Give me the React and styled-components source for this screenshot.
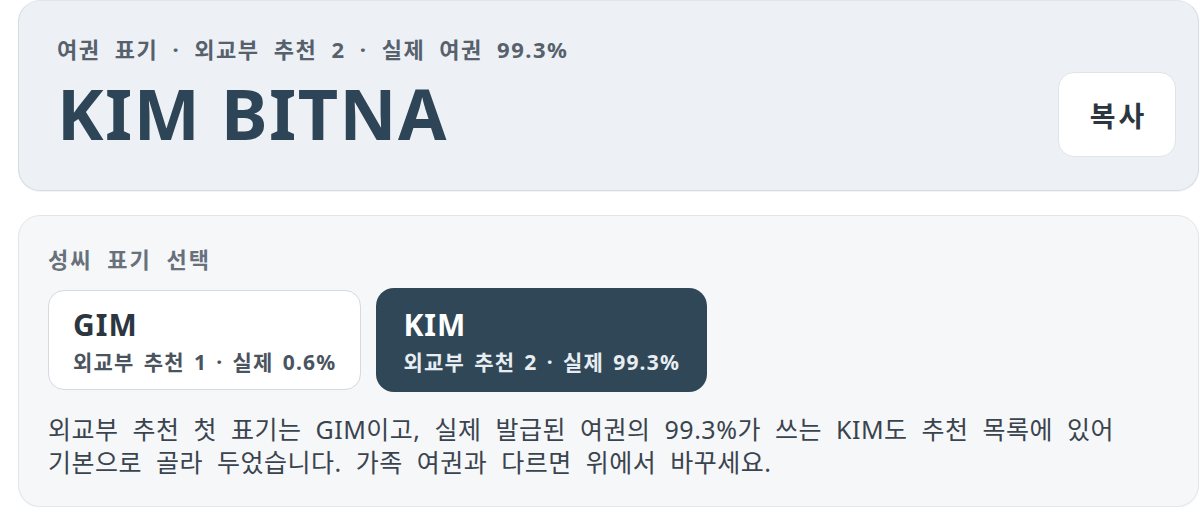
import React, { useState } from 'react';
import styled, { createGlobalStyle } from 'styled-components';

const GlobalStyle = createGlobalStyle`
  * { box-sizing: border-box; }
  body {
    margin: 0;
    background: #ffffff;
    font-family: "Noto Sans", "Noto Sans CJK KR", sans-serif;
    word-break: keep-all;
  }
`;

const Page = styled.div`
  display: flex;
  flex-direction: column;
  gap: 24px;
  padding: 0 1px 0 18px;
  width: 1200px;
`;

const Hero = styled.section`
  display: flex;
  align-items: center;
  justify-content: space-between;
  background: #edf0f5;
  border: 1px solid #d5dde4;
  border-top-color: #e1e6ec;
  border-radius: 22px;
  padding: 29px 22px 31px 38px;
  min-height: 191px;
  box-shadow: 0 1px 1px rgba(30, 50, 70, 0.06);
`;

const HeroText = styled.div`
  display: flex;
  flex-direction: column;
  gap: 8px;
`;

const Caption = styled.div`
  font-size: 22px;
  font-weight: 700;
  color: #56616c;
  line-height: 28px;
  letter-spacing: 1.5px;
  word-spacing: 7px;
`;

const Title = styled.h1`
  margin: 0;
  font-size: 70px;
  font-weight: 700;
  line-height: 84px;
  letter-spacing: 1.5px;
  color: #2d4556;
`;

const CopyButton = styled.button`
  align-self: flex-end;
  width: 118px;
  height: 85px;
  margin-bottom: 2px;
  padding: 0 0 0 3px;
  background: #ffffff;
  border: 1px solid #dfe4e9;
  border-radius: 16px;
  font-family: inherit;
  font-size: 28px;
  font-weight: 700;
  letter-spacing: 3px;
  color: #2b3640;
  cursor: pointer;
`;

const Panel = styled.section`
  background: #f6f7f9;
  border: 1px solid #e2e6ea;
  border-radius: 22px;
  padding: 29px 30px 27px 29px;
  box-shadow: 0 1px 1px rgba(30, 50, 70, 0.05);
`;

const Heading = styled.h2`
  margin: 0 0 17px;
  font-size: 22px;
  font-weight: 700;
  line-height: 28px;
  letter-spacing: 2px;
  word-spacing: 7px;
  color: #68717b;
`;

const Options = styled.div`
  display: flex;
  gap: 17px;
  margin-bottom: 23px;
`;

const Option = styled.button`
  display: flex;
  flex-direction: column;
  align-items: flex-start;
  padding: 15px 24px 14px;
  border-radius: 16px;
  border: 1px solid ${p => (p.$active ? '#2f4757' : '#d3dae0')};
  background: ${p => (p.$active ? '#2f4757' : '#ffffff')};
  color: ${p => (p.$active ? '#ffffff' : '#2b3640')};
  box-shadow: ${p => (p.$active ? '0 0 0 2px #2f4757' : 'none')};
  font-family: inherit;
  text-align: left;
  cursor: pointer;
`;

const OptionName = styled.span`
  font-size: 30px;
  font-weight: 700;
  line-height: 38px;
  letter-spacing: 1px;
`;

const OptionMeta = styled.span`
  margin-top: 5px;
  font-size: 21px;
  font-weight: 700;
  line-height: 26px;
  letter-spacing: 1.2px;
  word-spacing: 2.5px;
  color: ${p => (p.$active ? '#e8edf1' : '#4a545e')};
`;

const Note = styled.p`
  margin: 0;
  font-size: 25px;
  line-height: 33px;
  letter-spacing: 0.5px;
  word-spacing: 7px;
  color: #3a444e;
  max-width: 1110px;
`;

const choices = [
  { name: 'GIM', meta: '외교부 추천 1 · 실제 0.6%' },
  { name: 'KIM', meta: '외교부 추천 2 · 실제 99.3%' },
];

export default function App() {
  const [picked, setPicked] = useState('KIM');
  return (
    <Page>
      <GlobalStyle />
      <Hero>
        <HeroText>
          <Caption>여권 표기 · 외교부 추천 2 · 실제 여권 99.3%</Caption>
          <Title>{picked} BITNA</Title>
        </HeroText>
        <CopyButton>복사</CopyButton>
      </Hero>
      <Panel>
        <Heading>성씨 표기 선택</Heading>
        <Options>
          {choices.map(c => (
            <Option key={c.name} $active={picked === c.name} onClick={() => setPicked(c.name)}>
              <OptionName>{c.name}</OptionName>
              <OptionMeta $active={picked === c.name}>{c.meta}</OptionMeta>
            </Option>
          ))}
        </Options>
        <Note>
          외교부 추천 첫 표기는 GIM이고, 실제 발급된 여권의 99.3%가 쓰는 KIM도 추천 목록에 있어 기본으로 골라 두었습니다. 가족 여권과 다르면 위에서 바꾸세요.
        </Note>
      </Panel>
    </Page>
  );
}
